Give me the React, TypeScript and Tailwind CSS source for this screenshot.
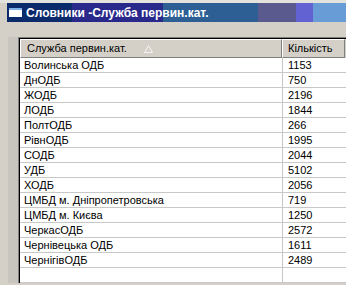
import React from 'react';

const rows: [string, string][] = [
  ['Волинська ОДБ', '1153'],
  ['ДнОДБ', '750'],
  ['ЖОДБ', '2196'],
  ['ЛОДБ', '1844'],
  ['ПолтОДБ', '266'],
  ['РівнОДБ', '1995'],
  ['СОДБ', '2044'],
  ['УДБ', '5102'],
  ['ХОДБ', '2056'],
  ['ЦМБД м. Дніпропетровська', '719'],
  ['ЦМБД м. Києва', '1250'],
  ['ЧеркасОДБ', '2572'],
  ['Чернівецька ОДБ', '1611'],
  ['ЧернігівОДБ', '2489'],
  ['', ''],
];

export default function App() {
  return (
    <div className="w-[346px] h-[285px] overflow-hidden bg-[#d4d0c8] font-['Liberation_Sans',Arial,sans-serif] text-black">
      <div className="h-[3px] bg-[#e4e2dc]" />
      {/* title bar */}
      <div className="ml-[7px] h-[19px] flex items-center bg-[linear-gradient(90deg,#0b2a6c_0,#0b2a6c_65px,#29298c_65px,#29298c_156px,#2d5f94_156px,#2d5f94_251px,#5a5a8e_251px,#5a5a8e_289px,#6262d2_289px,#6262d2_306px,#679cd6_306px)]">
        <div className="ml-[2px] w-[13px] h-[9px] bg-white border-t-2 border-[#7fb0e8]" />
        <span className="ml-[4px] text-white font-bold text-[12px] leading-none">Словники -Служба первин.кат.</span>
      </div>
      <div className="flex pt-[15px]">
        <div className="w-[8px]" />
        <div className="w-[10px] bg-[#c8c5be]" />
        <div className="flex-1 border-l border-t border-[#808080]">
          <div className="border-l border-t border-black bg-white">
            {/* header */}
            <div className="flex h-[19px] bg-[#d4d0c8] text-[11px]">
              <div className="w-[262px] flex items-center border-t border-l border-white border-r border-b border-r-[#808080] border-b-[#808080] pl-[6px]">
                <span>Служба первин.кат.</span>
                <svg className="ml-[17px]" width="9" height="8" viewBox="0 0 9 8">
                  <path d="M4.5 0.5 L8.5 7.5 L0.5 7.5 Z" fill="none" stroke="#f4f4f4" strokeWidth="1" />
                </svg>
              </div>
              <div className="w-[63px] flex items-center border-t border-l border-white border-r border-b border-r-[#808080] border-b-[#808080] pl-[5px]">
                Кількість
              </div>
              <div className="flex-1" />
            </div>
            {/* body */}
            {rows.map(([name, count], i) => (
              <div key={i} className="flex h-[15px] text-[11px] leading-none border-b border-[#c8c8c8]">
                <div className="w-[263px] flex items-center pl-[4px] border-r border-[#c8c8c8]">{name}</div>
                <div className="flex-1 flex items-center pl-[5px]">{count}</div>
              </div>
            ))}
          </div>
        </div>
      </div>
    </div>
  );
}
